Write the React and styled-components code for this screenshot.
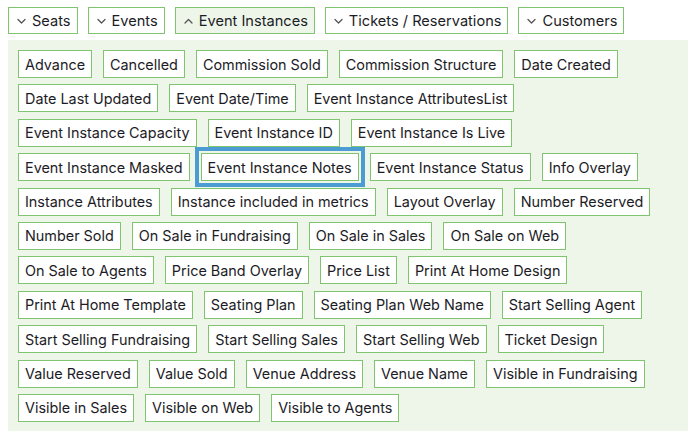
import React, { useState } from "react";
import styled, { createGlobalStyle } from "styled-components";

const GlobalStyle = createGlobalStyle`
  html, body {
    margin: 0;
    padding: 0;
    background: #fff;
  }
  body {
    font-family: Inter, "Liberation Sans", sans-serif;
    color: #1c1c26;
  }
`;

const Page = styled.div`
  padding: 7px 11px 0 8px;
`;

const TabBar = styled.div`
  display: flex;
  gap: 10px;
  margin-bottom: 6px;
`;

const Tab = styled.button`
  display: flex;
  align-items: center;
  gap: 6px;
  height: 27px;
  padding: 0 6px 0 8px;
  border: 1px solid #7fc46f;
  background: ${(props) => (props.open ? "#eef6ea" : "#fff")};
  font-family: inherit;
  font-size: 14.6px;
  color: #1c1c26;
  cursor: pointer;
`;

const Panel = styled.div`
  background: #eef6ea;
  padding: 10px 10px 9px 10px;
  display: flex;
  flex-wrap: wrap;
  gap: 6.4px 11px;
`;

const Chip = styled.button`
  height: 28px;
  padding: 0 6px;
  border: 1px solid #7fc46f;
  background: #fff;
  font-family: inherit;
  font-size: 14.4px;
  color: #1c1c26;
  cursor: pointer;
  outline: ${(props) => (props.selected ? "4px solid #4a9cd2" : "none")};
  outline-offset: 2px;
`;

const Chevron = ({ up }) => (
  <svg width="9" height="6" viewBox="0 0 9 6" fill="none">
    <polyline
      points={up ? "1,5 4.5,1.5 8,5" : "1,1.5 4.5,5 8,1.5"}
      stroke="#555"
      strokeWidth="1.3"
      strokeLinecap="round"
      strokeLinejoin="round"
    />
  </svg>
);

const tabs = ["Seats", "Events", "Event Instances", "Tickets / Reservations", "Customers"];

const fields = [
  "Advance",
  "Cancelled",
  "Commission Sold",
  "Commission Structure",
  "Date Created",
  "Date Last Updated",
  "Event Date/Time",
  "Event Instance AttributesList",
  "Event Instance Capacity",
  "Event Instance ID",
  "Event Instance Is Live",
  "Event Instance Masked",
  "Event Instance Notes",
  "Event Instance Status",
  "Info Overlay",
  "Instance Attributes",
  "Instance included in metrics",
  "Layout Overlay",
  "Number Reserved",
  "Number Sold",
  "On Sale in Fundraising",
  "On Sale in Sales",
  "On Sale on Web",
  "On Sale to Agents",
  "Price Band Overlay",
  "Price List",
  "Print At Home Design",
  "Print At Home Template",
  "Seating Plan",
  "Seating Plan Web Name",
  "Start Selling Agent",
  "Start Selling Fundraising",
  "Start Selling Sales",
  "Start Selling Web",
  "Ticket Design",
  "Value Reserved",
  "Value Sold",
  "Venue Address",
  "Venue Name",
  "Visible in Fundraising",
  "Visible in Sales",
  "Visible on Web",
  "Visible to Agents",
];

export default function App() {
  const [openTab, setOpenTab] = useState("Event Instances");
  const [selected, setSelected] = useState("Event Instance Notes");

  return (
    <Page>
      <GlobalStyle />
      <TabBar>
        {tabs.map((t) => (
          <Tab key={t} open={openTab === t} onClick={() => setOpenTab(t)}>
            <Chevron up={openTab === t} />
            {t}
          </Tab>
        ))}
      </TabBar>
      <Panel>
        {fields.map((f) => (
          <Chip key={f} selected={selected === f} onClick={() => setSelected(f)}>
            {f}
          </Chip>
        ))}
      </Panel>
    </Page>
  );
}
